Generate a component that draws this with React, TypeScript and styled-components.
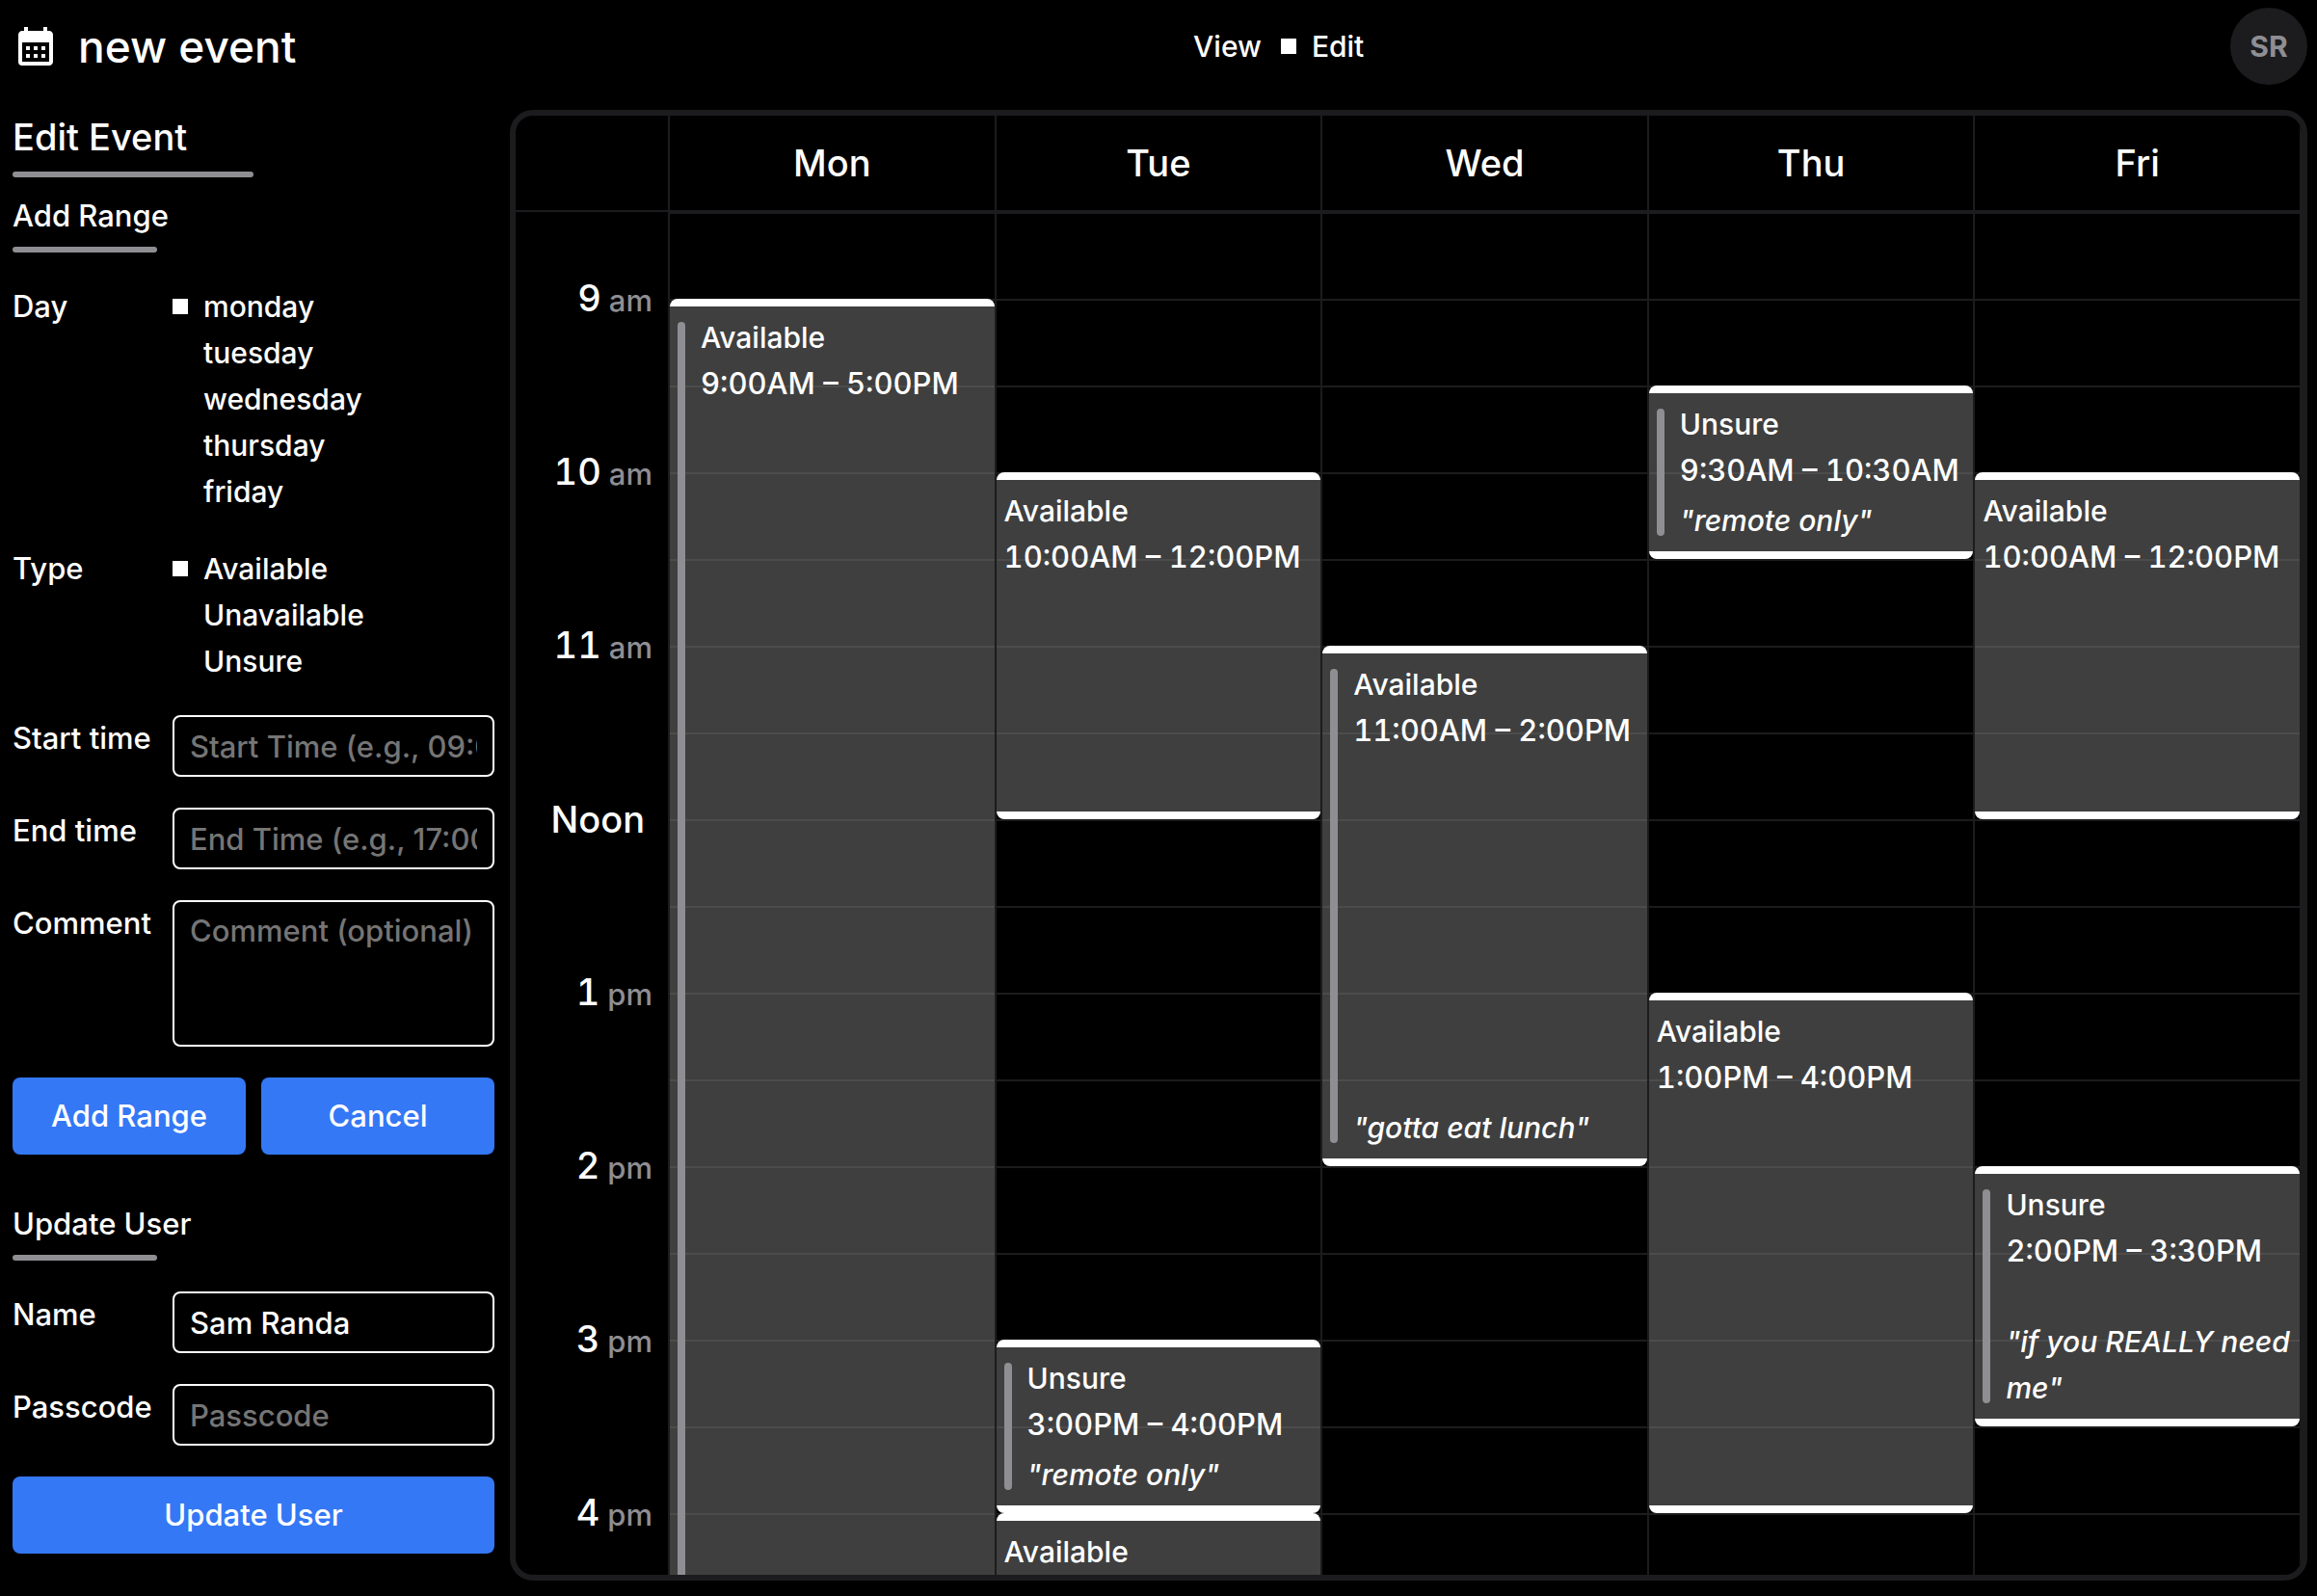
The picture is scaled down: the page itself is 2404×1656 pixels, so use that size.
import React, { useState } from "react";
import styled, { createGlobalStyle } from "styled-components";
import { MdCalendarMonth } from "react-icons/md";

const color = {
  bg: "#000000",
  text: "#ffffff",
  line: "#1c1c1e",
  muted: "#8e8e93",
  placeholder: "#757575",
  accent: "#3478f6",
  range: "rgba(120, 120, 120, 0.52)",
};

const GlobalStyle = createGlobalStyle`
  *, *::before, *::after { box-sizing: border-box; }
  body {
    margin: 0;
    background: ${color.bg};
    color: ${color.text};
    font: 500 31px/48px Inter, "Liberation Sans", sans-serif;
  }
  h1, h2, h3, p { margin: 0; font: inherit; }
`;

const Page = styled.div`
  display: flex;
  flex-direction: column;
  height: 100vh;
  padding: 0 10px 16px 13px;
`;

const Header = styled.header`
  display: flex;
  align-items: center;
  justify-content: space-between;
  flex: none;
  height: 96px;
`;

const Brand = styled.div`
  display: flex;
  align-items: center;
  gap: 20px;
`;

const Title = styled.h1`
  font-size: 46px;
`;

const ModeSwitch = styled.div`
  display: flex;
  gap: 20px;
`;

const Avatar = styled.button`
  width: 80px;
  height: 80px;
  padding: 0;
  border: 0;
  border-radius: 50%;
  background: ${color.line};
  color: ${color.muted};
  font: inherit;
  font-size: 30px;
  font-weight: 700;
`;

const Main = styled.main`
  display: flex;
  flex: 1;
  gap: 16px;
  min-height: 0;
  padding-top: 18px;
`;

const Sidebar = styled.aside`
  flex: none;
  width: 500px;
`;

const PanelTitle = styled.h2`
  font-size: 38px;
  line-height: 56px;

  &::after {
    content: "";
    display: block;
    width: 50%;
    height: 6px;
    margin: 8px 0 16px;
    border-radius: 3px;
    background: ${color.muted};
  }
`;

const Form = styled.form`
  display: flex;
  flex-direction: column;
  gap: 32px;

  & + & {
    margin-top: 48px;
  }
`;

const FormTitle = styled.h3`
  &::after {
    content: "";
    display: block;
    width: 30%;
    height: 6px;
    margin-top: 8px;
    border-radius: 3px;
    background: ${color.muted};
  }
`;

const Field = styled.div`
  display: grid;
  grid-template-columns: 150px 1fr;
  gap: 16px;
`;

const Choices = styled.div`
  display: flex;
  flex-direction: column;
`;

const Choice = styled.label`
  display: flex;
  align-items: center;
  gap: 16px;
  font-size: 30px;
  cursor: pointer;
`;

const Radio = styled.input.attrs({ type: "radio" })`
  appearance: none;
  width: 16px;
  height: 16px;
  margin: 0;

  &:checked {
    background: ${color.text};
  }
`;

const TextInput = styled.input`
  width: 100%;
  min-width: 0;
  height: 64px;
  padding: 6px 16px;
  border: 2px solid ${color.text};
  border-radius: 8px;
  background: ${color.bg};
  color: ${color.text};
  font: inherit;

  &::placeholder {
    color: ${color.placeholder};
    opacity: 1;
  }
`;

const TextArea = styled(TextInput).attrs({ as: "textarea" })`
  display: block;
  height: 152px;
  resize: none;
`;

const Actions = styled.div`
  display: flex;
  gap: 16px;
`;

const Button = styled.button`
  flex: 1;
  height: 80px;
  border: 0;
  border-radius: 8px;
  background: ${color.accent};
  color: ${color.text};
  font: inherit;
`;

const Calendar = styled.section`
  display: flex;
  flex: 1;
  flex-direction: column;
  min-width: 0;
  overflow: hidden;
  border: 6px solid ${color.line};
  border-radius: 24px;
`;

const Week = styled.div`
  display: grid;
  grid-template-columns: 160px repeat(5, minmax(0, 1fr));

  & > * {
    border-right: 2px solid ${color.line};
  }
`;

const WeekHeader = styled(Week)`
  flex: none;
  height: 100px;
  border-bottom: 2px solid ${color.line};
  font-size: 38px;
`;

const WeekBody = styled(Week)`
  flex: 1;
  min-height: 0;
  overflow-y: auto;
  scrollbar-width: none;
`;

const DayName = styled.div`
  display: flex;
  align-items: center;
  justify-content: center;
`;

const Hours = styled.div`
  display: grid;
  grid-auto-rows: 180px;
  align-items: center;
  justify-items: end;
  padding-right: 16px;
`;

const Hour = styled.div`
  font-size: 38px;
  font-variant-numeric: tabular-nums;
`;

const Meridiem = styled.span`
  margin-left: 8px;
  color: ${color.muted};
  font-size: 31px;
`;

const Noon = styled.span`
  margin-right: 8px;
`;

const DayColumn = styled.div`
  display: grid;
  grid-template-columns: minmax(0, 1fr);
  grid-template-rows: repeat(18, 90px);
`;

const Slot = styled.div<{ $row: number }>`
  grid-column: 1;
  grid-row: ${(p) => p.$row};
  border-top: 2px solid ${color.line};
`;

const Range = styled.article<{ $from: number; $to: number }>`
  display: flex;
  gap: 16px;
  grid-column: 1;
  grid-row: ${(p) => p.$from} / ${(p) => p.$to};
  min-height: 0;
  padding: 8px 4px 8px 8px;
  border: solid ${color.text};
  border-width: 8px 0;
  border-radius: 8px;
  background: ${color.range};
  background-clip: padding-box;
  font-size: 30px;
`;

const RangeBar = styled.div`
  flex: none;
  width: 8px;
  margin: 8px 0;
  border-radius: 4px;
  background: ${color.muted};
`;

const RangeText = styled.div`
  display: flex;
  flex: 1;
  flex-direction: column;
  min-width: 0;
`;

const RangeTime = styled.p`
  font-size: 31px;
  font-variant-numeric: tabular-nums;
  white-space: nowrap;
`;

const RangeComment = styled.p`
  margin-top: auto;
  font-style: italic;
`;

type Entry = {
  kind: "Available" | "Unavailable" | "Unsure";
  start: number;
  end: number;
  marked?: boolean;
  comment?: string;
};

const OPENING = 8.5;

const week: { name: string; entries: Entry[] }[] = [
  { name: "Mon", entries: [{ kind: "Available", start: 9, end: 17, marked: true }] },
  {
    name: "Tue",
    entries: [
      { kind: "Available", start: 10, end: 12 },
      { kind: "Unsure", start: 15, end: 16, marked: true, comment: "remote only" },
      { kind: "Available", start: 16, end: 17 },
    ],
  },
  {
    name: "Wed",
    entries: [{ kind: "Available", start: 11, end: 14, marked: true, comment: "gotta eat lunch" }],
  },
  {
    name: "Thu",
    entries: [
      { kind: "Unsure", start: 9.5, end: 10.5, marked: true, comment: "remote only" },
      { kind: "Available", start: 13, end: 16 },
    ],
  },
  {
    name: "Fri",
    entries: [
      { kind: "Available", start: 10, end: 12 },
      { kind: "Unsure", start: 14, end: 15.5, marked: true, comment: "if you REALLY need me" },
    ],
  },
];

const days = ["monday", "tuesday", "wednesday", "thursday", "friday"];
const kinds = ["Available", "Unavailable", "Unsure"];
const hours = [9, 10, 11, 12, 13, 14, 15, 16];
const slots = Array.from({ length: 18 }, (_, i) => i + 1);

const toRow = (time: number) => (time - OPENING) * 2 + 1;

const formatTime = (time: number) => {
  const hour = Math.floor(time);
  const minutes = time % 1 ? "30" : "00";
  return `${hour > 12 ? hour - 12 : hour}:${minutes}${hour >= 12 ? "PM" : "AM"}`;
};

function RadioList(props: {
  name: string;
  options: string[];
  value: string;
  onChange: (value: string) => void;
}) {
  return (
    <>
      {props.options.map((option) => (
        <Choice key={option}>
          <Radio
            name={props.name}
            value={option}
            checked={props.value === option}
            onChange={() => props.onChange(option)}
          />
          {option}
        </Choice>
      ))}
    </>
  );
}

function RangeCard({ entry }: { entry: Entry }) {
  return (
    <Range $from={toRow(entry.start)} $to={toRow(entry.end)}>
      {entry.marked && <RangeBar />}
      <RangeText>
        <p>{entry.kind}</p>
        <RangeTime>
          {formatTime(entry.start)} – {formatTime(entry.end)}
        </RangeTime>
        {entry.comment && <RangeComment>"{entry.comment}"</RangeComment>}
      </RangeText>
    </Range>
  );
}

export default function App() {
  const [mode, setMode] = useState("Edit");
  const [day, setDay] = useState("monday");
  const [kind, setKind] = useState("Available");
  const [name, setName] = useState("Sam Randa");
  const stay = (e: React.FormEvent) => e.preventDefault();

  return (
    <>
      <GlobalStyle />
      <Page>
        <Header>
          <Brand>
            <MdCalendarMonth size={48} />
            <Title>new event</Title>
          </Brand>
          <ModeSwitch role="radiogroup">
            <RadioList name="mode" options={["View", "Edit"]} value={mode} onChange={setMode} />
          </ModeSwitch>
          <Avatar type="button">SR</Avatar>
        </Header>

        <Main>
          <Sidebar>
            <PanelTitle>Edit Event</PanelTitle>
            <Form onSubmit={stay}>
              <FormTitle>Add Range</FormTitle>
              <Field role="radiogroup" aria-labelledby="day-label">
                <span id="day-label">Day</span>
                <Choices>
                  <RadioList name="day" options={days} value={day} onChange={setDay} />
                </Choices>
              </Field>
              <Field role="radiogroup" aria-labelledby="type-label">
                <span id="type-label">Type</span>
                <Choices>
                  <RadioList name="type" options={kinds} value={kind} onChange={setKind} />
                </Choices>
              </Field>
              <Field>
                <label htmlFor="start">Start time</label>
                <TextInput id="start" placeholder="Start Time (e.g., 09:00)" />
              </Field>
              <Field>
                <label htmlFor="end">End time</label>
                <TextInput id="end" placeholder="End Time (e.g., 17:00)" />
              </Field>
              <Field>
                <label htmlFor="comment">Comment</label>
                <TextArea id="comment" placeholder="Comment (optional)" />
              </Field>
              <Actions>
                <Button type="submit">Add Range</Button>
                <Button type="button">Cancel</Button>
              </Actions>
            </Form>

            <Form onSubmit={stay}>
              <FormTitle>Update User</FormTitle>
              <Field>
                <label htmlFor="name">Name</label>
                <TextInput id="name" value={name} onChange={(e) => setName(e.target.value)} />
              </Field>
              <Field>
                <label htmlFor="passcode">Passcode</label>
                <TextInput id="passcode" type="password" placeholder="Passcode" />
              </Field>
              <Actions>
                <Button type="submit">Update User</Button>
              </Actions>
            </Form>
          </Sidebar>

          <Calendar>
            <WeekHeader>
              <div />
              {week.map((d) => (
                <DayName key={d.name}>{d.name}</DayName>
              ))}
            </WeekHeader>
            <WeekBody>
              <Hours>
                {hours.map((h) => (
                  <Hour key={h}>
                    {h === 12 ? (
                      <Noon>Noon</Noon>
                    ) : (
                      <>
                        {h > 12 ? h - 12 : h}
                        <Meridiem>{h > 12 ? "pm" : "am"}</Meridiem>
                      </>
                    )}
                  </Hour>
                ))}
              </Hours>
              {week.map((d) => (
                <DayColumn key={d.name}>
                  {slots.map((s) => (
                    <Slot key={s} $row={s} />
                  ))}
                  {d.entries.map((entry) => (
                    <RangeCard key={entry.start} entry={entry} />
                  ))}
                </DayColumn>
              ))}
            </WeekBody>
          </Calendar>
        </Main>
      </Page>
    </>
  );
}
